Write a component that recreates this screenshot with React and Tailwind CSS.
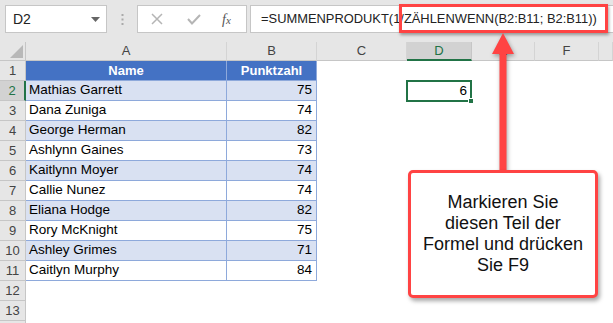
import React from 'react';

const rows = [
  ['Mathias Garrett', 75],
  ['Dana Zuniga', 74],
  ['George Herman', 82],
  ['Ashlynn Gaines', 73],
  ['Kaitlynn Moyer', 74],
  ['Callie Nunez', 74],
  ['Eliana Hodge', 82],
  ['Rory McKnight', 75],
  ['Ashley Grimes', 71],
  ['Caitlyn Murphy', 84],
];

const cols = [
  { label: 'A', w: 'w-[201px]' },
  { label: 'B', w: 'w-[90px]' },
  { label: 'C', w: 'w-[90px]' },
  { label: 'D', w: 'w-[65px]' },
  { label: 'E', w: 'w-[63px]' },
  { label: 'F', w: 'w-[64px]' },
  { label: '', w: 'flex-1' },
];

const RowHead = ({ n, active }) => (
  <div
    className={
      'w-[26px] shrink-0 h-full flex items-center justify-center border-r border-b text-[13px] ' +
      (active
        ? 'bg-[#d2d2d2] text-[#217346] border-b-[#c6c6c6] border-r-2 border-r-[#217346]'
        : 'bg-[#e6e6e6] text-[#444] border-[#c6c6c6]')
    }
  >
    {n}
  </div>
);

export default function App() {
  return (
    <div className="relative w-[613px] h-[323px] overflow-hidden bg-white font-['Liberation_Sans',Arial,sans-serif] text-black">
      {/* Formula bar */}
      <div className="h-[42px] bg-[#e6e6e6] flex items-start pt-[5px] pl-[5px]">
        <div className="w-[102px] h-[28px] bg-white border border-[#c6c6c6] flex items-center justify-between pl-[7px] pr-[6px] text-[14px] text-[#222]">
          <span>D2</span>
          <svg width="9" height="5" viewBox="0 0 9 5"><path d="M0 0h9L4.5 5z" fill="#666" /></svg>
        </div>
        <div className="w-[30px] h-[28px] flex items-center justify-center">
          <svg width="3" height="11" viewBox="0 0 3 11" fill="#aaa">
            <rect x="0.5" y="0" width="2" height="2" />
            <rect x="0.5" y="4.5" width="2" height="2" />
            <rect x="0.5" y="9" width="2" height="2" />
          </svg>
        </div>
        <div className="w-[110px] h-[28px] bg-white border border-[#c6c6c6] flex items-center">
          <svg className="ml-[13px]" width="12" height="12" viewBox="0 0 12 12" stroke="#b5b5b5" strokeWidth="1.5">
            <path d="M1 1l10 10M11 1L1 11" />
          </svg>
          <svg className="ml-[24px]" width="14" height="11" viewBox="0 0 14 11" fill="none" stroke="#b5b5b5" strokeWidth="2">
            <path d="M1 5l4 4.5L13 1" />
          </svg>
          <span className="ml-[21px] font-['Liberation_Serif',serif] italic text-[14px] text-[#555]">
            f<span className="text-[11px]">x</span>
          </span>
        </div>
        <div className="flex-1 ml-[3px] h-[28px] bg-white border border-[#c6c6c6] border-r-0 flex items-center pl-[10px] text-[12.9px] text-[#222] whitespace-nowrap">
          =SUMMENPRODUKT(1/ZÄHLENWENN(B2:B11; B2:B11))
        </div>
      </div>

      {/* Column headers */}
      <div className="h-[19px] flex">
        <div className="w-[26px] shrink-0 bg-[#e6e6e6] border-r border-b border-[#c6c6c6] relative">
          <svg className="absolute left-[10px] top-[3px]" width="13" height="13" viewBox="0 0 13 13">
            <path d="M13 0V13H0z" fill="#b8b8b8" />
          </svg>
        </div>
        {cols.map((c, i) => (
          <div
            key={i}
            className={
              c.w +
              ' shrink-0 flex items-center justify-center border-r text-[13px] ' +
              (c.label === 'D'
                ? 'bg-[#d2d2d2] text-[#217346] border-[#c6c6c6] border-b-2 border-b-[#217346]'
                : 'bg-[#e6e6e6] text-[#444] border-[#d4d4d4] border-b border-b-[#c6c6c6]')
            }
          >
            {c.label}
          </div>
        ))}
      </div>

      {/* Header row 1 */}
      <div className="h-[20px] flex">
        <RowHead n={1} />
        <div className="w-[201px] shrink-0 bg-[#4472c4] border-r border-b border-[#8ea9db] flex items-center justify-center text-white font-bold text-[13px]">
          Name
        </div>
        <div className="w-[90px] shrink-0 bg-[#4472c4] border-r border-b border-[#8ea9db] flex items-center justify-center text-white font-bold text-[13px]">
          Punktzahl
        </div>
      </div>

      {rows.map(([name, pts], i) => {
        const shaded = i % 2 === 0;
        const bg = shaded ? 'bg-[#d9e1f2]' : 'bg-white';
        return (
          <div key={name} className="h-[20px] flex">
            <RowHead n={i + 2} active={i === 0} />
            <div className={'w-[201px] shrink-0 border-r border-b border-[#8ea9db] flex items-center pl-[3px] text-[13.5px] ' + bg}>
              {name}
            </div>
            <div className={'w-[90px] shrink-0 border-r border-b border-[#8ea9db] flex items-center justify-end pr-[4px] text-[13.5px] ' + bg}>
              {pts}
            </div>
            <div className="w-[90px] shrink-0" />
            <div className="w-[65px] shrink-0 relative">
              {i === 0 && (
                <div className="absolute left-[-1px] top-[-1px] w-[66px] h-[22px] border-2 border-[#217346] flex items-center justify-end pr-[3px] text-[13.5px]">
                  6
                  <div className="absolute right-[-4px] bottom-[-4px] w-[6px] h-[6px] bg-[#217346] border border-white" />
                </div>
              )}
            </div>
          </div>
        );
      })}

      {[12, 13].map((n) => (
        <div key={n} className="h-[20px] flex">
          <RowHead n={n} />
        </div>
      ))}
      <div className="h-[20px] flex">
        <RowHead n="" />
      </div>

      {/* Red highlight around formula part */}
      <div className="absolute left-[399px] top-[4px] w-[209px] h-[29px] border-[3px] border-[#ff4343] shadow-[1px_2px_3px_rgba(0,0,0,0.35)]" />

      {/* Arrow */}
      <svg className="absolute left-[488px] top-[32px]" width="32" height="142" viewBox="0 0 32 142" style={{ filter: 'drop-shadow(1px 2px 2px rgba(0,0,0,0.35))' }}>
        <path d="M15 1L26 22H18.5V142H11.5V22H4z" fill="#ff4343" />
      </svg>

      {/* Callout */}
      <div className="absolute left-[408px] top-[170px] w-[190px] h-[128px] bg-white border-[3px] border-[#ff4343] rounded-[5px] shadow-[2px_3px_4px_rgba(0,0,0,0.35)] flex items-center justify-center text-center text-[18px] leading-[21px] text-[#111]">
        <div>
          Markieren Sie
          <br />
          diesen Teil der
          <br />
          Formel und drücken
          <br />
          Sie F9
        </div>
      </div>
    </div>
  );
}
